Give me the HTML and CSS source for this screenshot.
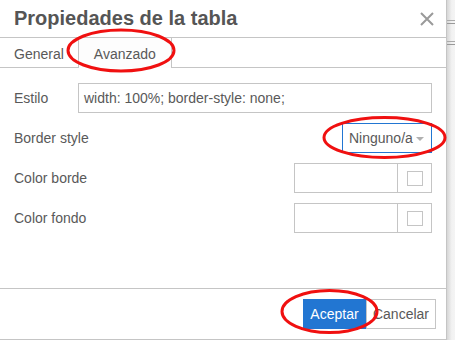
FILE: index.html
```html
<!DOCTYPE html>
<html lang="es">
<head>
<meta charset="utf-8">
<title>Propiedades de la tabla</title>
<link rel="stylesheet" href="styles.css">
</head>
<body>
<div class="page">
  <div class="dialog">
    <div class="header">
      <div class="title">Propiedades de la tabla</div>
      <svg class="close" width="14" height="14" viewBox="0 0 14 14"><path d="M1 1 L13 13 M13 1 L1 13" stroke="#9a9a9a" stroke-width="2" fill="none"/></svg>
    </div>
    <div class="tabs">
      <div class="tab">General</div>
      <div class="tab active">Avanzado</div>
    </div>
    <div class="body">
      <div class="row">
        <span class="label">Estilo</span>
        <div class="input wide">width: 100%; border-style: none;</div>
      </div>
      <div class="row">
        <span class="label">Border style</span>
        <div class="select">Ninguno/a<span class="caret"></span></div>
      </div>
      <div class="row">
        <span class="label">Color borde</span>
        <div class="color"><div class="color-text"></div><div class="color-btn"><span class="swatch"></span></div></div>
      </div>
      <div class="row">
        <span class="label">Color fondo</span>
        <div class="color"><div class="color-text"></div><div class="color-btn"><span class="swatch"></span></div></div>
      </div>
    </div>
    <div class="footer">
      <div class="btn primary">Aceptar</div>
      <div class="btn">Cancelar</div>
    </div>
  </div>
  <div class="backdrop"></div>
</div>
<svg class="marks" width="455" height="340" viewBox="0 0 455 340">
  <ellipse cx="121" cy="50.5" rx="53" ry="20.5" fill="none" stroke="#f01010" stroke-width="3"/>
  <ellipse cx="384.5" cy="137.5" rx="60.5" ry="20" fill="none" stroke="#f01010" stroke-width="3"/>
  <ellipse cx="329.5" cy="311.5" rx="47.5" ry="21" fill="none" stroke="#f01010" stroke-width="3"/>
</svg>
</body>
</html>
```
FILE: styles.css
```css
* { box-sizing: border-box; }
html, body { margin: 0; padding: 0; }
body {
  width: 455px;
  height: 340px;
  overflow: hidden;
  font-family: "Liberation Sans", Arial, sans-serif;
  font-size: 14px;
  color: #595959;
  background: #ececec;
  position: relative;
}
.page { display: flex; height: 340px; }
.dialog {
  width: 447px;
  height: 340px;
  background: #fff;
  border-right: 1px solid #c5c5c5;
  border-bottom: 1px solid #c5c5c5;
  display: flex;
  flex-direction: column;
  flex: none;
}
.backdrop {
  flex: 1;
  background:
    linear-gradient(#aaa, #aaa) 0 20px / 100% 1px no-repeat,
    linear-gradient(#999, #999) 0 23px / 100% 1px no-repeat,
    linear-gradient(#aaa, #aaa) 0 41px / 100% 1px no-repeat,
    linear-gradient(#999, #999) 0 44px / 100% 1px no-repeat,
    linear-gradient(to right, #d6d6d6, #f2f2f2 60%, #f4f4f4);
}
.header {
  height: 38px;
  border-bottom: 1px solid #c5c5c5;
  display: flex;
  align-items: center;
  justify-content: space-between;
  padding: 0 12px 1px 14px;
}
.title {
  font-size: 20px;
  font-weight: bold;
  color: #555;
}
.close { display: block; margin-top: 1px; }
.tabs {
  height: 30px;
  border-bottom: 1px solid #c5c5c5;
  display: flex;
}
.tab {
  height: 29px;
  padding: 3px 14px 0;
  border-right: 1px solid #c5c5c5;
  display: flex;
  align-items: center;
  background: #fff;
}
.tab.active {
  background: #fdfdfd;
  height: 30px;
  padding: 2px 15px 0;
  margin-bottom: -1px;
}
.body {
  flex: 1;
  padding: 15px 14px 0 14px;
  display: flex;
  flex-direction: column;
  gap: 10px;
}
.row {
  height: 30px;
  display: flex;
  align-items: center;
  justify-content: space-between;
}
.input {
  height: 30px;
  border: 1px solid #c5c5c5;
  padding: 0 5px;
  display: flex;
  align-items: center;
  color: #595959;
}
.wide { width: 354px; }
.select {
  width: 90px;
  height: 30px;
  border: 1px solid #2276d2;
  padding: 0 0 0 6px;
  display: flex;
  align-items: center;
  color: #595959;
  position: relative;
}
.caret {
  margin-left: 3px;
  width: 0;
  height: 0;
  border-left: 4px solid transparent;
  border-right: 4px solid transparent;
  border-top: 4px solid #b0b0b0;
  margin-top: 1px;
}
.color {
  width: 138px;
  height: 30px;
  border: 1px solid #c5c5c5;
  display: flex;
}
.color-text { width: 103px; border-right: 1px solid #c5c5c5; }
.color-btn {
  flex: 1;
  display: flex;
  align-items: center;
  justify-content: center;
}
.swatch {
  width: 16px;
  height: 15px;
  border: 1px solid #c5c5c5;
  display: block;
}
.footer {
  height: 51px;
  border-top: 1px solid #c5c5c5;
  display: flex;
  justify-content: flex-end;
  align-items: flex-start;
  padding: 10px 10px 0 0;
}
.btn {
  height: 30px;
  padding: 0 6px;
  border: 1px solid #c5c5c5;
  background: #fff;
  display: flex;
  align-items: center;
  color: #595959;
}
.btn.primary {
  background: #2276d2;
  border-color: #2276d2;
  color: #fff;
  width: 63px;
  justify-content: center;
}
.marks {
  position: absolute;
  left: 0;
  top: 0;
  pointer-events: none;
}
```
